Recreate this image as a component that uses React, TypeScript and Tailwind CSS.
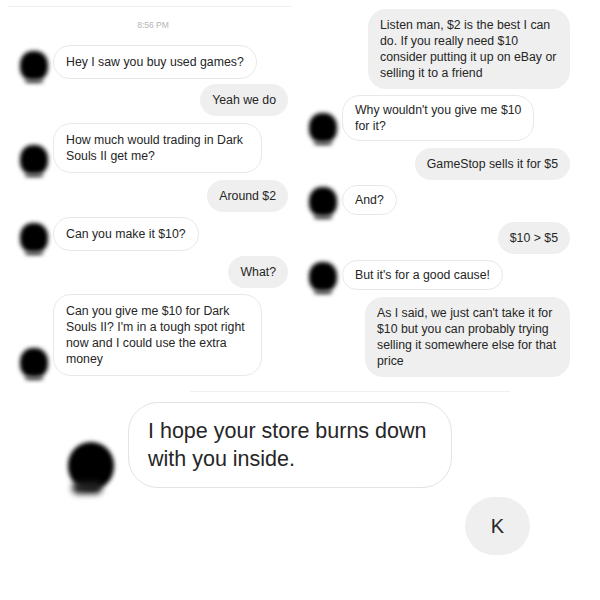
import React from "react";

type BubbleProps = { lines: string[]; gray?: boolean; w?: string; tight?: boolean };

function Bubble({ lines, gray, w, tight }: BubbleProps) {
  const base =
    "px-[12px] rounded-[18px] text-[12.3px] leading-[16px] text-[#262626] whitespace-nowrap";
  const look = gray
    ? "bg-[#efefef] py-[8px]"
    : tight
    ? "bg-white border border-[#e8e8e8] py-[6px] px-[11px]"
    : "bg-white border border-[#e8e8e8] py-[8px] px-[11px]";
  return (
    <div className={`${base} ${look} ${w ?? ""}`}>
      {lines.map((l, i) => (
        <div key={i}>{l}</div>
      ))}
    </div>
  );
}

function Blob() {
  return (
    <div className="w-[32px] h-[20px] shrink-0">
      <div className="-mt-[8px] w-[32px] h-[34px] flex flex-col items-center">
        <div className="w-[28px] h-[30px] rounded-[45%] bg-black blur-[2px]" />
        <div className="w-[18px] h-[4px] -mt-[2px] rounded-full bg-[#555] blur-[2px]" />
      </div>
    </div>
  );
}

function BigBlob() {
  return (
    <div className="w-[48px] h-[56px] shrink-0">
      <div className="w-[46px] h-[48px] mt-[2px] rounded-full bg-black blur-[2px]" />
      <div className="w-[30px] h-[12px] ml-[4px] -mt-[8px] rounded-full bg-[#222] blur-[3px]" />
    </div>
  );
}

function Them({
  lines,
  w,
  mt,
  pl,
  tight,
}: {
  lines: string[];
  w?: string;
  mt: string;
  pl: string;
  tight?: boolean;
}) {
  return (
    <div className={`flex items-end gap-[3px] ${mt} ${pl}`}>
      <Blob />
      <Bubble lines={lines} w={w} tight={tight} />
    </div>
  );
}

function Me({
  lines,
  w,
  mt,
  pr,
}: {
  lines: string[];
  w?: string;
  mt: string;
  pr: string;
}) {
  return (
    <div className={`flex justify-end ${mt} ${pr}`}>
      <Bubble lines={lines} gray w={w} />
    </div>
  );
}

export default function App() {
  return (
    <div
      className="w-[600px] h-[600px] bg-white overflow-hidden flex flex-col"
      style={{ fontFamily: '"Liberation Sans", Arial, sans-serif' }}
    >
      <div className="flex">
        {/* left column */}
        <div className="w-[300px] pt-[6px] flex flex-col">
          <div className="ml-[8px] w-[284px] h-px bg-[#f0f0f0]" />
          <div className="mt-[13px] pl-[6px] text-center text-[8.5px] leading-[10px] text-[#b5b5b5]">
            8:56 PM
          </div>
          <Them lines={["Hey I saw you buy used games?"]} mt="mt-[15px]" pl="pl-[18px]" />
          <Me lines={["Yeah we do"]} mt="mt-[5px]" pr="pr-[12px]" />
          <Them
            lines={["How much would trading in Dark", "Souls II get me?"]}
            w="w-[209px]"
            mt="mt-[7px]"
            pl="pl-[18px]"
          />
          <Me lines={["Around $2"]} mt="mt-[7px]" pr="pr-[12px]" />
          <Them lines={["Can you make it $10?"]} mt="mt-[5px]" pl="pl-[18px]" />
          <Me lines={["What?"]} mt="mt-[5px]" pr="pr-[12px]" />
          <Them
            lines={[
              "Can you give me $10 for Dark",
              "Souls II? I'm in a tough spot right",
              "now and I could use the extra",
              "money",
            ]}
            w="w-[209px]"
            mt="mt-[6px]"
            pl="pl-[18px]"
          />
        </div>
        {/* right column */}
        <div className="w-[300px] pt-[9px] flex flex-col">
          <Me
            lines={[
              "Listen man, $2 is the best I can",
              "do. If you really need $10",
              "consider putting it up on eBay or",
              "selling it to a friend",
            ]}
            w="w-[202px]"
            mt="mt-0"
            pr="pr-[30px]"
          />
          <Them
            lines={["Why wouldn't you give me $10", "for it?"]}
            w="w-[192px]"
            mt="mt-[6px]"
            pl="pl-[7px]"
            tight
          />
          <Me lines={["GameStop sells it for $5"]} mt="mt-[7px]" pr="pr-[30px]" />
          <Them lines={["And?"]} mt="mt-[5px]" pl="pl-[7px]" tight />
          <Me lines={["$10 > $5"]} mt="mt-[7px]" pr="pr-[30px]" />
          <Them lines={["But it's for a good cause!"]} mt="mt-[6px]" pl="pl-[7px]" tight />
          <Me
            lines={[
              "As I said, we just can't take it for",
              "$10 but you can probably trying",
              "selling it somewhere else for that",
              "price",
            ]}
            w="w-[205px]"
            mt="mt-[7px]"
            pr="pr-[30px]"
          />
        </div>
      </div>

      {/* bottom */}
      <div className="mt-[14px] ml-[190px] w-[320px] h-px bg-[#f0f0f0]" />
      <div className="mt-[10px] pl-[68px] flex items-end gap-[12px]">
        <div className="translate-y-[10px]">
          <BigBlob />
        </div>
        <div className="w-[324px] rounded-[30px] border border-[#e3e3e3] bg-white px-[19px] py-[14px] text-[21.5px] leading-[28px] text-[#262626] whitespace-nowrap">
          <div>I hope your store burns down</div>
          <div>with you inside.</div>
        </div>
      </div>
      <div className="mt-[9px] pr-[70px] flex justify-end">
        <div className="w-[65px] h-[58px] rounded-full bg-[#efefef] flex items-center justify-center text-[20px] text-[#262626]">
          K
        </div>
      </div>
    </div>
  );
}
